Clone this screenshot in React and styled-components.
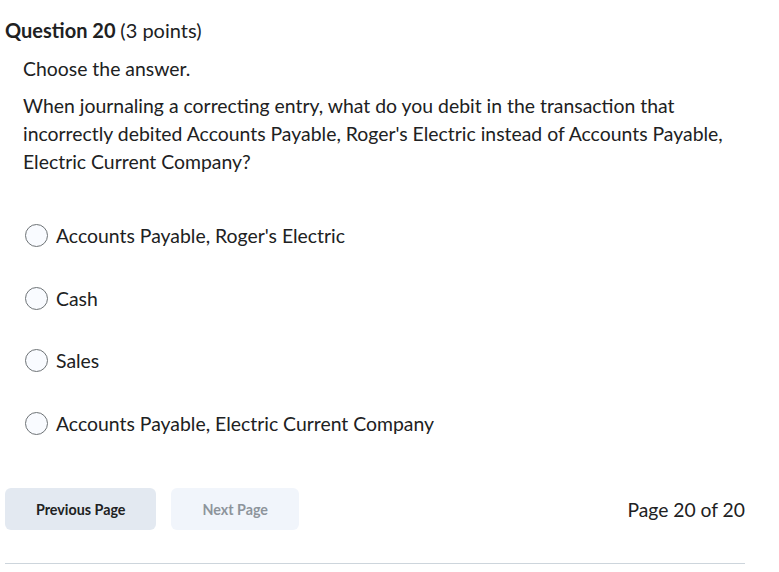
import React from "react";
import styled, { createGlobalStyle } from "styled-components";

const GlobalStyle = createGlobalStyle`
  html, body {
    margin: 0;
    padding: 0;
    background: #ffffff;
  }
  body {
    font-family: Lato, "Open Sans", sans-serif;
    color: #202122;
  }
`;

const Page = styled.div`
  width: 779px;
  height: 572px;
  box-sizing: border-box;
  padding: 17px 34px 0 5px;
  display: flex;
  flex-direction: column;
`;

const QuestionTitle = styled.h2`
  margin: 0;
  font-size: 20px;
  line-height: 26px;
  font-weight: 700;

  span {
    font-weight: 400;
  }
`;

const QuestionBody = styled.div`
  padding: 12px 0 0 18px;
`;

const Prompt = styled.p`
  margin: 0 0 9px;
  font-size: 19.4px;
  line-height: 28px;
`;

const Options = styled.div`
  display: flex;
  flex-direction: column;
  gap: 35.7px;
  margin-top: 37px;
  padding-left: 20px;
`;

const Option = styled.label`
  display: flex;
  align-items: center;
  gap: 8px;
  font-size: 19.4px;
  line-height: 27px;
  cursor: pointer;
`;

const Radio = styled.span`
  width: 21px;
  height: 21px;
  border-radius: 50%;
  border: 1px solid #6e7376;
  background: #f9fbff;
  flex-shrink: 0;
`;

const Footer = styled.div`
  display: flex;
  align-items: center;
  gap: 15px;
  margin-top: 51px;
`;

const PageButton = styled.button`
  height: 42px;
  padding: 0 31px;
  border: none;
  border-radius: 6px;
  font-family: Lato, "Open Sans", sans-serif;
  font-size: 14.3px;
  font-weight: 700;
  background: ${(p) => (p.disabled ? "#f1f5fb" : "#e3e9f1")};
  color: ${(p) => (p.disabled ? "#8d949b" : "#202122")};
  cursor: ${(p) => (p.disabled ? "default" : "pointer")};
`;

const PageCount = styled.div`
  margin-left: auto;
  font-size: 19.3px;
`;

const Divider = styled.hr`
  margin: 33px 0 0;
  border: none;
  border-top: 1px solid #cdd5dc;
`;

const answers = [
  "Accounts Payable, Roger's Electric",
  "Cash",
  "Sales",
  "Accounts Payable, Electric Current Company",
];

export default function App() {
  return (
    <Page>
      <GlobalStyle />
      <QuestionTitle>
        Question 20 <span>(3 points)</span>
      </QuestionTitle>
      <QuestionBody>
        <Prompt>Choose the answer.</Prompt>
        <Prompt>
          When journaling a correcting entry, what do you debit in the
          transaction that incorrectly debited Accounts Payable, Roger's
          Electric instead of Accounts Payable, Electric Current Company?
        </Prompt>
      </QuestionBody>
      <Options>
        {answers.map((a) => (
          <Option key={a}>
            <Radio />
            {a}
          </Option>
        ))}
      </Options>
      <Footer>
        <PageButton>Previous Page</PageButton>
        <PageButton disabled>Next Page</PageButton>
        <PageCount>Page 20 of 20</PageCount>
      </Footer>
      <Divider />
    </Page>
  );
}
